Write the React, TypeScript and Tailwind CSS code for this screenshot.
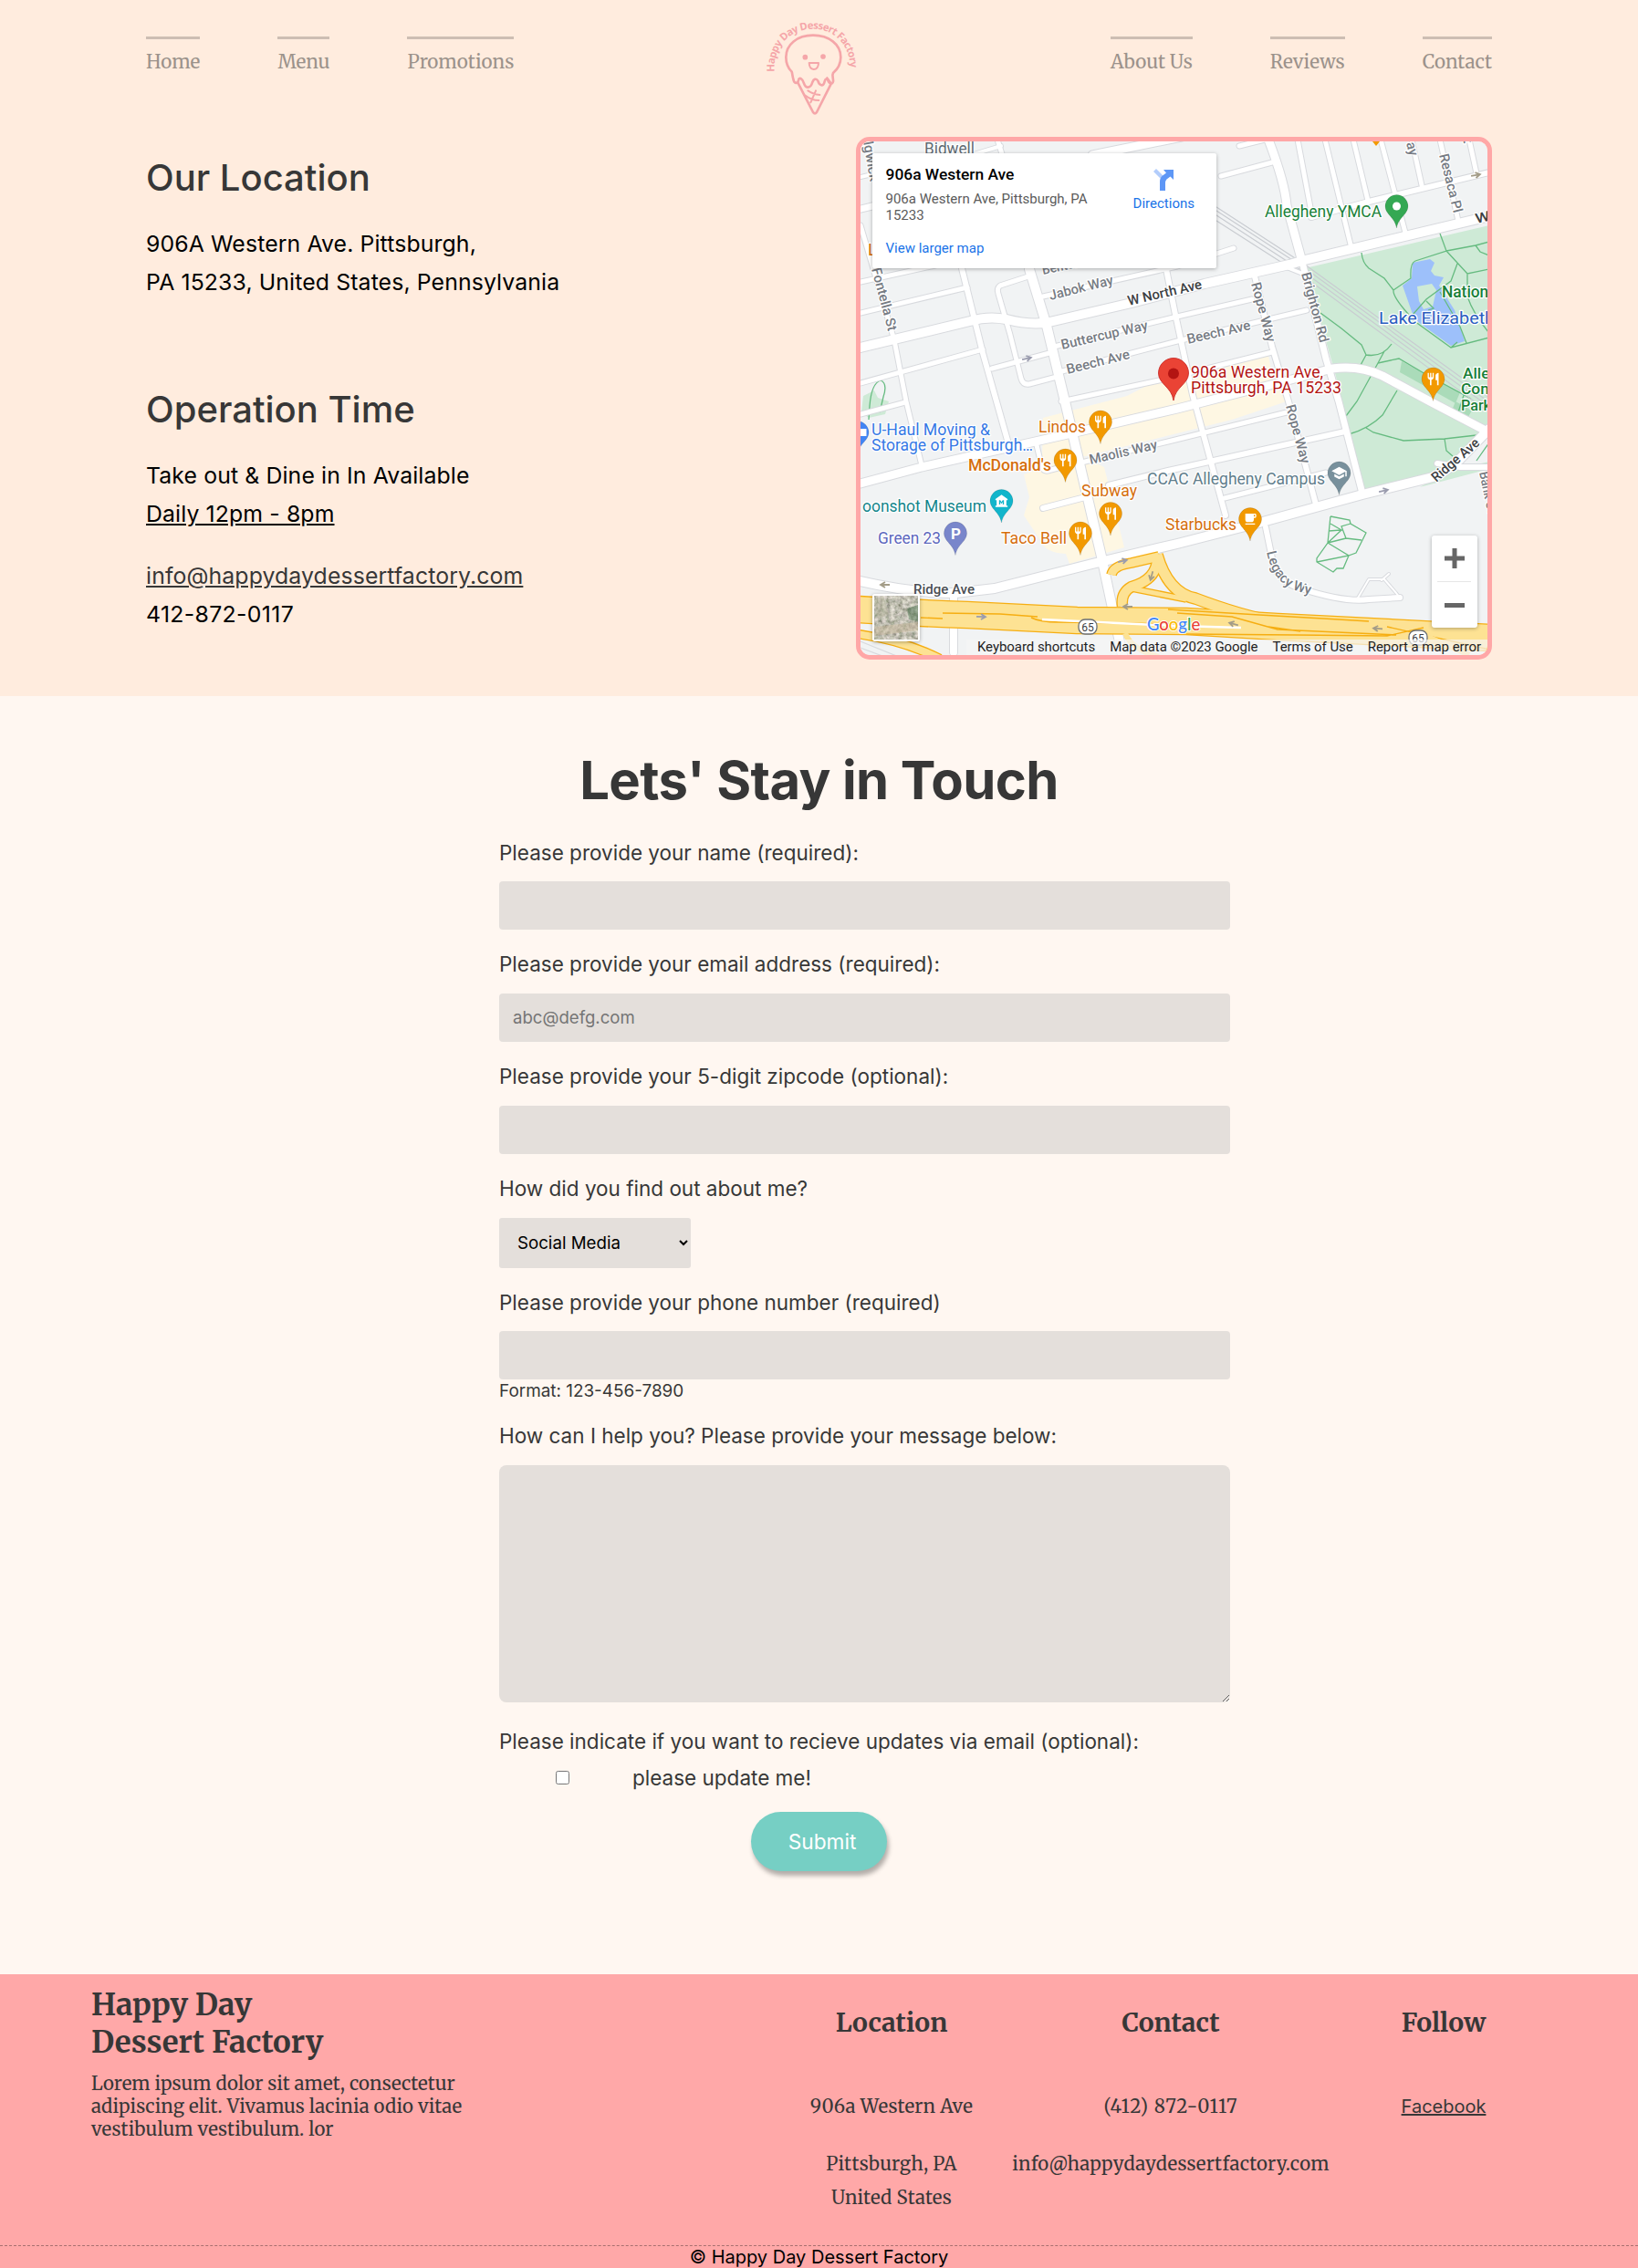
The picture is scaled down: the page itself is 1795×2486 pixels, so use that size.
import type { ReactNode } from "react";
import { MdRestaurant, MdSchool, MdLocalCafe, MdMuseum } from "react-icons/md";

/* ---------- Logo ---------- */

function Logo() {
  return (
    <svg viewBox="150 60 360 330" className="ml-px mt-5 h-[110px] w-[120px]" fill="none" stroke="#f5a6a9" strokeLinecap="round" strokeLinejoin="round">
      <defs>
        <path id="logo-arc" d="M203 236 C196 148 262 95 330 95 C400 95 458 150 452 240" />
      </defs>
      <text fill="#f5a6a9" stroke="none" fontSize="34" fontWeight="700" fontFamily="'Open Sans', 'Noto Sans', sans-serif">
        <textPath href="#logo-arc" textLength="412" lengthAdjust="spacing">Happy Day Dessert Factory</textPath>
      </text>
      <path strokeWidth="8" d="M260 236 C246 222 241 206 241 188 C241 146 278 116 330 116 C382 116 421 146 421 188 C421 208 412 226 396 240 C390 250 400 262 395 271 C390 279 382 273 379 265 C377 256 370 258 368 268 C364 288 350 280 346 266 C340 256 332 260 328 270 C322 292 306 292 300 274 C295 258 284 252 282 264 C279 276 268 276 265 260 C262 250 262 242 260 236 Z" />
      <path strokeWidth="8" d="M280 272 L330 369 Q336 377 342 369 L388 278" />
      <path strokeWidth="7" d="M376 256 L388 272" />
      <path strokeWidth="6" d="M313 298 Q330 310 352 312 M305 314 Q325 330 349 330 M339 298 L322 337" />
      <circle cx="304" cy="188" r="8.500" fill="#f5a6a9" stroke="none" />
      <circle cx="363" cy="186" r="8.500" fill="#f5a6a9" stroke="none" />
      <path strokeWidth="6" d="M317 207 H348 Q347 228 332 228 Q318 227 317 207 Z" />
    </svg>
  );
}

function NavLink({ children }: { children: ReactNode }) {
  return (
    <a href="#" className="border-t-[3px] border-[#cdbeb3] pt-[13px] font-['Merriweather',serif] text-[20.600px] font-normal leading-[25px] text-[#9b928b]">
      {children}
    </a>
  );
}

/* ---------- Map ---------- */

const streets: [number, string][] = [
  [5, "M943 247 L980 373 L993 440 L1010 510"],
  [6, "M1053 290 L1077 387 L1092 440 L1105 486"],
  [5, "M1130 302 L1096 313 Q1092 316 1094 322 L1107 367 L1119 415 Q1121 422 1128 421 L1162 412"],
  [5, "M943 309 L1025 291"],
  [5, "M943 343 L1060 315"],
  [5, "M943 420 L1077 383"],
  [5, "M1087 404 L1150 387"],
  [5, "M943 454 L992 441"],
  [7, "M943 229 L960 225"],
  [4, "M943 194 L960 190"],
  [4, "M1067 169 L1097 160"],
  [5, "M1093 153 L1100 175"],
  [9, "M1197 170 L1295 150"],
  [5, "M1143 325 L1290 292 L1352 272"],
  [5, "M1155 380 L1290 347 L1372 328"],
  [5, "M1160 408 L1290 374 L1432 340"],
  [5, "M1163 440 L1270 417 L1394 386"],
  [6, "M1277 290 L1287 340 L1307 433 L1313 455 L1343 565"],
  [6, "M1375 303 L1394 380 L1412 440 L1442 553"],
  [5, "M1185 507 L1280 484 L1410 452"],
  [6, "M1215 532 L1280 516 L1474 473"],
  [5, "M1342 546 L1453 518"],
  [6, "M1143 557 L1193 544"],
  [5, "M1136 488 L1142 513 Q1145 518 1152 515 L1163 512"],
  [6, "M1387 578 L1395 617 Q1400 637 1425 645 Q1475 661 1500 657 L1534 655"],
  [2, "M1487 657 L1500 635 L1517 635 L1530 650 L1534 655 M1514 636 L1522 629"],
  [5, "M1422 153 L1438 238"],
  [5, "M1452 153 L1480 268"],
  [5, "M1483 153 L1499 220"],
  [5, "M1513 153 L1540 255"],
  [5, "M1547 153 L1558 203"],
  [5, "M1578 153 L1598 242"],
  [5, "M1610 153 L1618 190"],
  [6, "M1437 238 L1500 221 L1632 189"],
  [5, "M1338 193 L1394 178"],
  [5, "M1358 160 L1386 153"],
  [8, "M1045 715 L1045 655"],
  [6, "M1575 508 L1600 512 L1632 512"],
];

const avenues: [number, string][] = [
  [10, "M943 381 L1063 352 Q1083 346 1103 350 Q1130 357 1150 353 L1240 332 L1320 311 L1413 290 L1430 285 L1632 237"],
  [9, "M1390 153 Q1408 200 1410 225 L1427 287"],
  [7, "M1427 287 L1453 393 L1467 440 L1492 537"],
  [10, "M1128 295 L1147 357 L1167 440 L1207 610 L1217 657 L1230 718"],
  [9, "M943 530 L1010 512 L1170 476 L1290 448 L1400 420 L1460 404 Q1490 400 1515 412 L1567 440 L1632 474"],
  [10, "M943 637 Q1000 650 1047 650 L1090 645 L1197 618 L1290 596 L1380 573 L1493 542 L1570 523 Q1585 517 1600 503 L1632 470"],
  [4, "M1405 291 L1430 301"],
];

const highways: [number, string][] = [
  [28, "M940 668 Q1000 672 1060 674 L1180 680 L1300 681 L1400 687 L1500 692 L1632 699"],
  [10, "M935 662 L1000 672"],
  [8, "M940 695 Q990 702 1030 722"],
  [9, "M1218 630 Q1220 620 1240 617 L1270 610"],
  [10, "M1268 608 Q1270 635 1240 643 Q1228 650 1230 664"],
  [11, "M1268 608 Q1280 650 1310 656 Q1360 675 1400 682"],
  [5, "M1240 645 L1300 657"],
];

function Pin({ x, y, color, children }: { x: number; y: number; color: string; children?: ReactNode }) {
  return (
    <g transform={`translate(${x} ${y})`}>
      <path d="M0 24 C-2 12 -12.500 9 -12.500 0 A12.500 12.500 0 1 1 12.500 0 C12.500 9 2 12 0 24 Z" fill={color} stroke="#00000030" strokeWidth=".6" />
      {children}
    </g>
  );
}

function Food({ x, y }: { x: number; y: number }) {
  return (
    <Pin x={x} y={y} color="#f29900">
      <MdRestaurant x={-8} y={-8} size={16} color="#fff" />
    </Pin>
  );
}

function Label({ x, y, w, size = 17, color = "#5f6b73", weight = 400, rotate = 0, children }: {
  x: number; y: number; w: number; size?: number; color?: string; weight?: number; rotate?: number; children: string;
}) {
  return (
    <text
      transform={`translate(${x} ${y}) rotate(${rotate})`}
      fontSize={size}
      fontWeight={weight}
      fill={color}
      textLength={w}
      lengthAdjust="spacingAndGlyphs"
      stroke="#fff"
      strokeWidth="2.5"
      strokeLinejoin="round"
      paintOrder="stroke"
    >
      {children}
    </text>
  );
}

const green = "#188038";
const orange = "#d56e0c";
const arrow = "M-5 0 H4 M0 -3 L5 0 L0 3";

function MapDrawing() {
  return (
    <svg viewBox="943 155 687 563" className="block h-[563px] w-[687px]" fontFamily="Roboto, sans-serif" fill="none">
      <rect x="943" y="155" width="687" height="563" fill="#f1f3f4" />
      <path fill="#fef7e3" d="M1143 458 L1235 434 L1262 420 L1390 390 L1396 420 L1410 440 L1350 460 L1290 475 L1170 505 L1142 500 Z M1142 492 L1165 490 L1210 512 L1232 600 L1172 618 L1168 607 Q1145 606 1140 592 L1122 565 L1128 545 L1122 520 L1145 512 Z" />
      <path fill="#ceead6" d="M1430 294 L1632 247 L1632 470 L1600 504 L1560 526 L1496 541 L1462 405 Z" />
      <path fill="#ceead6" d="M1556 534 L1632 514 L1632 506 L1590 515 Z M946 434 l12 -6 4 8 12 4 -4 14 -18 4 -8 -6 Z" />
      <path fill="#aadbb9" d="M1536 396 L1600 430 L1595 442 L1534 408 Z M1595 440 l18 10 -6 10 -16 -10 Z" />
      <path fill="#9dc0fa" d="M1548 288 L1567 284 L1572 288 L1568 297 L1572 302 L1582 304 L1577 313 L1594 340 L1605 374 L1590 379 L1550 350 L1537 313 L1547 305 Z" />
      <path fill="#ceead6" d="M1553 314 L1569 311 L1574 318 L1570 336 L1560 339 L1555 330 Z" />
      <path stroke="#66bb80" strokeWidth="1.300" d="M1492 277 Q1493 288 1500 294 L1517 305 L1527 318 Q1526 325 1543 344 L1550 352 L1590 381 L1632 370 M1527 318 L1546 305 Q1545 288 1551 286 L1585 275 L1578 256 M1585 275 L1617 269 L1632 265 M1585 275 L1608 300 L1632 295 M1597 289 L1590 308 L1563 328 L1548 345 M1608 300 L1608 325 Q1615 345 1632 365 M1578 320 L1600 358 L1607 376 M1617 269 L1622 276 L1632 280 M1447 343 L1470 360 L1492 378 L1497 389 Q1515 392 1525 377 M1497 389 L1490 402 M1517 385 L1510 398 L1487 440 L1475 456 M1510 398 L1533 393 L1562 410 L1612 437 M1531 428 L1515 455 Q1500 470 1478 476 M1497 469 L1505 474 L1538 483 L1583 481 L1618 477 M1583 481 L1585 494 L1592 500 M1598 452 L1605 430 M1618 505 L1632 485 M1563 330 l8 8 -6 2 M1597 375 L1590 381" />
      <path stroke="#66bb80" strokeWidth="1.300" d="M1458 566 L1479 570 L1480 574 L1497 584 L1486 606 L1478 609 L1472 623 L1465 623 L1461 627 L1443 616 L1443 612 L1455 595 L1458 566 M1458 574 L1470 581 L1456 582 M1455 595 L1475 590 L1492 592 M1455 595 L1478 609 L1443 616 M1475 590 L1470 577 L1480 574 M1470 581 L1455 595 M952 460 L953 445 Q955 420 965 417 Q973 420 968 435 L964 452" />

      <path stroke="#c9ccd1" strokeWidth="1.200" d="M1330 225 L1430 290 L1632 436 M1330 229 L1430 294 L1632 441 M1330 234 L1430 299 L1632 446 M1330 240 L1430 304 L1632 452" />

      {[...streets, ...avenues].map(([w, d]) => (
        <path key={d} d={d} stroke="#d8dade" strokeWidth={w + 2} strokeLinecap="round" strokeLinejoin="round" />
      ))}
      {[...streets, ...avenues].map(([w, d]) => (
        <path key={d} d={d} stroke="#fff" strokeWidth={w} strokeLinecap="round" strokeLinejoin="round" />
      ))}

      <path stroke="#d8dade" strokeWidth="1.200" d="M940 702 L990 722 M940 709 L975 722" />
      {highways.map(([w, d]) => (
        <path key={d} d={d} stroke="#f6ae12" strokeWidth={w + 2.600} />
      ))}
      {highways.map(([w, d]) => (
        <path key={d} d={d} stroke="#fde293" strokeWidth={w} />
      ))}
      <path stroke="#f6ae12" strokeWidth="1.400" d="M1033 672 L1096 673 L1137 676 M1009 677 L1033 678 M1130 677 Q1140 682 1160 682 L1290 684 M1290 672 L1350 676 L1400 690 L1530 696 M1390 687 L1425 692 M1300 695 L1420 696 L1520 697 L1560 688 M1520 687 L1632 712 M1280 668 L1380 674 L1450 678 L1500 681" />
      <path stroke="#fff" strokeWidth="2.500" d="M1142 679 L1290 686 L1360 688" />
      <path stroke="#fde293" strokeWidth="6" d="M1233 694 Q1240 712 1270 720 M1560 696 L1610 718" />

      {[[1125, 393, -12], [1230, 615, -12], [1075, 676, 2], [1516, 538, -12]].map(([x, y, r]) => (
        <path key={x} d={arrow} transform={`translate(${x} ${y}) rotate(${r})`} stroke="#9a9cae" strokeWidth="1.800" />
      ))}
      {[[970, 641, 180], [1236, 665, 180], [1352, 684, 195], [1510, 689, 185], [1262, 631, 105], [1617, 192, -10]].map(([x, y, r]) => (
        <path key={x} d={arrow} transform={`translate(${x} ${y}) rotate(${r})`} stroke="#a39c88" strokeWidth="1.800" />
      ))}

      <Label x={1013} y={169} w={55} size={17.500}>Bidwell</Label>
      <Label x={946} y={156} w={44} size={15} weight={500} rotate={80} color="#767b83">lgwick</Label>
      <Label x={951} y={280} w={10} size={18} color={orange}>L</Label>
      <Label x={955} y={295} w={71} size={15} weight={500} rotate={75} color="#767b83">Fontella St</Label>
      <Label x={1143} y={301} w={72} size={15} weight={500} rotate={-12} color="#767b83">Benton Way</Label>
      <Label x={1151} y={329} w={72} size={15} weight={500} rotate={-14} color="#767b83">Jabok Way</Label>
      <Label x={1237} y={335} w={83} size={15} weight={500} rotate={-13} color="#3c4043">W North Ave</Label>
      <Label x={1164} y={383} w={97} size={15} weight={500} rotate={-13} color="#767b83">Buttercup Way</Label>
      <Label x={1170} y={410} w={71} size={15} weight={500} rotate={-14} color="#767b83">Beech Ave</Label>
      <Label x={1302} y={377} w={71} size={15} weight={500} rotate={-13} color="#767b83">Beech Ave</Label>
      <Label x={1371} y={311} w={67} size={15} weight={500} rotate={75} color="#767b83">Rope Way</Label>
      <Label x={1426} y={300} w={79} size={15} weight={500} rotate={75} color="#767b83">Brighton Rd</Label>
      <Label x={1409} y={445} w={66} size={15} weight={500} rotate={75} color="#767b83">Rope Way</Label>
      <Label x={1195} y={509} w={76} size={15} weight={500} rotate={-13} color="#767b83">Maolis Way</Label>
      <Label x={1577} y={170} w={66} size={15} weight={500} rotate={76} color="#767b83">Resaca Pl</Label>
      <Label x={1541} y={157} w={15} size={15} weight={500} rotate={76} color="#767b83">ay</Label>
      <Label x={1603} y={152} w={6} size={15} weight={500} rotate={76} color="#767b83">t</Label>
      <Label x={1618} y={245} w={16} size={15} weight={500} rotate={-13} color="#3c4043">W</Label>
      <Label x={1574} y={529} w={64} size={15} weight={500} rotate={-41} color="#3c4043">Ridge Ave</Label>
      <Label x={1621} y={518} w={46} size={15} weight={500} rotate={78} color="#767b83">Bank St</Label>
      <Label x={1001} y={651} w={67} size={15} weight={500} color="#4b4f55">Ridge Ave</Label>
      <defs>
        <path id="legacy-wy" d="M1388 605 Q1394 634 1413 644 Q1424 650 1440 652" />
      </defs>
      <text fontSize="15" fontWeight="500" fill="#767b83" stroke="#fff" strokeWidth="2.500" paintOrder="stroke">
        <textPath href="#legacy-wy">Legacy Wy</textPath>
      </text>

      <Label x={1386} y={238} w={128} size={18} color={green}>Allegheny YMCA</Label>
      <Pin x={1530.500} y={226} color="#34a853"><circle r="4.500" fill="#fff" /></Pin>
      <path d="M1504 155 h8 l-4 5 Z" fill="#f29900" />
      <Label x={1580} y={326} w={65} size={17.500} weight={500} color={green}>National</Label>
      <Label x={1511} y={355} w={127} size={18} color="#2a5dc0">Lake Elizabeth</Label>
      <Label x={1603} y={415} w={76} size={17} weight={500} color={green}>Allegheny</Label>
      <Label x={1601} y={432} w={80} size={17} weight={500} color={green}>Commons</Label>
      <Label x={1601} y={450} w={33} size={17} weight={500} color={green}>Park</Label>
      <Food x={1570.500} y={415.500} />

      <Label x={1305} y={414} w={145} size={18} color="#b31412">906a Western Ave,</Label>
      <Label x={1305} y={431} w={165} size={18} color="#b31412">Pittsburgh, PA 15233</Label>
      <path d="M1286 439 C1284 424 1269.500 421 1269.500 409 A16.500 16.500 0 1 1 1302.500 409 C1302.500 421 1288 424 1286 439 Z" fill="#ea4335" stroke="#c5221f" strokeWidth=".8" />
      <circle cx="1286" cy="409.500" r="6" fill="#b31412" />

      <Pin x={939.500} y={474} color="#4285f4"><rect x="3" y="-4" width="7" height="8" fill="#fff" /></Pin>
      <Label x={955} y={477} w={130} size={18} color="#3578e5">{"U-Haul Moving &"}</Label>
      <Label x={955} y={494} w={177} size={18} color="#3578e5">Storage of Pittsburgh…</Label>
      <Label x={1138} y={474} w={52} size={18} color={orange}>Lindos</Label>
      <Food x={1206} y={462.500} />
      <Label x={1061} y={516} w={91} size={17.500} weight={500} color={orange}>McDonald's</Label>
      <Food x={1167.500} y={504.500} />
      <Label x={1185} y={544} w={61} size={17.500} color={orange}>Subway</Label>
      <Food x={1217} y={563} />
      <Label x={1097} y={596} w={72} size={18} color={orange}>Taco Bell</Label>
      <Food x={1184} y={584.500} />
      <Label x={945} y={561} w={136} size={18} color="#13868c">oonshot Museum</Label>
      <Pin x={1097.500} y={549} color="#12b5cb"><MdMuseum x={-8} y={-8} size={16} color="#fff" /></Pin>
      <Label x={962} y={596} w={69} size={18} color="#5c67bd">Green 23</Label>
      <Pin x={1047} y={584.500} color="#7986cb">
        <text x="-5" y="6" fontSize="17" fontWeight="700" fill="#fff">P</text>
      </Pin>
      <Label x={1257} y={531} w={195} size={18} color="#5f7d8b">CCAC Allegheny Campus</Label>
      <Pin x={1467.500} y={518.500} color="#78909c"><MdSchool x={-9} y={-9} size={18} color="#fff" /></Pin>
      <Label x={1277} y={581} w={78} size={18} color={orange}>Starbucks</Label>
      <Pin x={1370} y={569} color="#f29900"><MdLocalCafe x={-8} y={-8} size={16} color="#fff" /></Pin>

      {[[1192, 687], [1554, 699]].map(([x, y]) => (
        <g key={x}>
          <rect x={x - 10} y={y - 8} width="20" height="16" rx="7" fill="#fff" stroke="#6b6f74" strokeWidth="1.300" />
          <text x={x} y={y + 4.500} fontSize="12" textAnchor="middle" fill="#3c4043">65</text>
        </g>
      ))}
      <text x="1257" y="691" fontSize="18.500" fontWeight="500" letterSpacing="-.2" fontFamily="Lato, sans-serif" stroke="#fff" strokeWidth="2" paintOrder="stroke" textLength="58">
        <tspan fill="#4285f4">G</tspan><tspan fill="#ea4335">o</tspan><tspan fill="#fbbc05">o</tspan><tspan fill="#4285f4">g</tspan><tspan fill="#34a853">l</tspan><tspan fill="#ea4335">e</tspan>
      </text>
    </svg>
  );
}

function Satellite() {
  return (
    <svg viewBox="0 0 48 48" className="h-12 w-12">
      <defs>
        <filter id="ground" x="0" y="0" width="100%" height="100%">
          <feTurbulence type="fractalNoise" baseFrequency=".22" numOctaves="4" seed="6" />
          <feColorMatrix values=".9 0 0 0 .08  .8 .1 0 0 .07  .8 0 .05 0 .02  0 0 0 0 1" />
        </filter>
      </defs>
      <rect width="48" height="48" filter="url(#ground)" />
      <path d="M0 34 L48 29 L48 38 L0 44 Z" fill="#c9b593" opacity=".4" />
      <path d="M36 14 L48 10 L48 28 L38 26 Z" fill="#3f6b45" opacity=".45" />
      <path d="M0 4 L10 0 L16 20 L4 26 Z" fill="#a9a98c" opacity=".35" />
    </svg>
  );
}

function MapCard() {
  return (
    <div className="relative h-[573px] w-[697px] overflow-hidden rounded-[15px] border-5 border-[#ffa7a7] font-['Roboto',sans-serif]">
      <MapDrawing />
      <div className="absolute left-[13px] top-[13px] flex h-[126px] w-[377px] justify-between rounded-[2px] bg-white pl-[14.500px] pr-[24px] pt-[13px] shadow-[0_1px_4px_rgba(0,0,0,0.3)]">
        <div>
          <div className="text-[17.400px] font-medium leading-5 text-black">906a Western Ave</div>
          <div className="mt-2 w-[225px] text-[15px] leading-[18px] text-[#5b5b5b]">906a Western Ave, Pittsburgh, PA 15233</div>
          <div className="mt-[18px] text-[15px] leading-[18px] text-[#1a73e8]">View larger map</div>
        </div>
        <div className="flex flex-col items-center">
          <svg viewBox="0 0 24 24" className="mt-1 h-6 w-6">
            <path d="M1 3 L4 0 L12 8 L11 13 Z" fill="#b3cdfb" />
            <path d="M8 24 V14 Q8 10 11 7.500 L15 4.500 L12 1 H23 V12 L19.500 8.500 L15.500 11.500 Q14 13 14 15 V24 Z" fill="#5e97f6" />
          </svg>
          <div className="mt-[5px] text-[15px] leading-[18px] text-[#1a73e8]">Directions</div>
        </div>
      </div>
      <div className="absolute bottom-[15px] left-[13px] rounded-[3px] border-2 border-white shadow-[0_1px_4px_rgba(0,0,0,0.3)]">
        <Satellite />
      </div>
      <div className="absolute bottom-[30px] right-[11px] flex h-[101px] w-[50px] flex-col items-center rounded-[3px] bg-white shadow-[0_1px_4px_rgba(0,0,0,0.3)]">
        <svg viewBox="0 0 50 101" className="h-[101px] w-[50px]">
          <path d="M14 25 H36 M25 14 V36 M14 76.500 H36" stroke="#666" strokeWidth="5" />
          <path d="M6 50.500 H43" stroke="#e6e6e6" strokeWidth="1" />
        </svg>
      </div>
      <div className="absolute bottom-0 right-0 flex h-[17px] items-center gap-[16px] bg-[#f5f5f5]/70 pl-3 pr-[7px] text-[15px] leading-[17px] tracking-[-0.050px] text-[#1f1f1f]">
        <span>Keyboard shortcuts</span>
        <span>Map data ©2023 Google</span>
        <span>Terms of Use</span>
        <span>Report a map error</span>
      </div>
    </div>
  );
}

/* ---------- Form ---------- */

function FieldLabel({ children, className = "" }: { children: ReactNode; className?: string }) {
  return <label className={`block text-[22.500px] leading-7 text-[#373737] ${className}`}>{children}</label>;
}

function TextInput({ placeholder, className = "mt-[18px]" }: { placeholder?: string; className?: string }) {
  return (
    <input
      placeholder={placeholder}
      className={`block h-[53px] w-[801px] rounded-[4px] bg-[#e4dfdb] px-[15px] pb-px text-[18.600px] placeholder:text-[#757575] ${className}`}
    />
  );
}

function ContactForm() {
  return (
    <section className="h-[1401px] bg-[#fff7f1] pt-[57px]">
      <h1 className="text-center text-[58px] font-bold leading-[70px] tracking-[-0.600px] text-[#373737]">Lets' Stay in Touch</h1>
      <form className="ml-[547px] w-[801px]">
        <FieldLabel className="mt-[31px]">Please provide your name (required):</FieldLabel>
        <TextInput className="mt-[17px]" />
        <FieldLabel className="mt-6">Please provide your email address (required):</FieldLabel>
        <TextInput placeholder="abc@defg.com" />
        <FieldLabel className="mt-6">Please provide your 5-digit zipcode (optional):</FieldLabel>
        <TextInput />
        <FieldLabel className="mt-6">How did you find out about me?</FieldLabel>
        <select className="mt-[18px] block h-[55px] w-[210px] rounded-[3px] bg-[#e4dfdb] px-4 pb-px text-[18.700px] text-black">
          <option>Social Media</option>
        </select>
        <FieldLabel className="mt-6">Please provide your phone number (required)</FieldLabel>
        <TextInput className="mt-[17px]" />
        <small className="block pt-px text-[18.900px] leading-[23px] text-[#373737]">Format: 123-456-7890</small>
        <FieldLabel className="mt-6">How can I help you? Please provide your message below:</FieldLabel>
        <textarea className="mt-[18px] block h-[260px] w-[801px] rounded-[8px] bg-[#e4dfdb]" />
        <FieldLabel className="mt-[29px]">Please indicate if you want to recieve updates via email (optional):</FieldLabel>
        <div className="mt-[11px] flex h-7 items-center pl-[62px]">
          <input type="checkbox" className="h-[15px] w-[15px]" />
          <span className="ml-[69px] pt-[2px] text-[22.500px] leading-7 text-[#373737]">please update me!</span>
        </div>
        <button type="button" className="ml-[276px] mt-6 block h-[65px] w-[149px] rounded-full bg-[#76cfc4] pl-[7px] pt-px text-[22.700px] text-white shadow-[2px_5px_5px_rgba(0,0,0,0.3)]">
          Submit
        </button>
      </form>
    </section>
  );
}

/* ---------- Footer ---------- */

function FooterColumn({ title, className, children }: { title: string; className: string; children: ReactNode }) {
  return (
    <div className={`flex shrink-0 flex-col items-center whitespace-nowrap pt-[35px] ${className}`}>
      <h3 className="mb-[62px] text-[28.200px] font-bold leading-9 tracking-normal">{title}</h3>
      {children}
    </div>
  );
}

function Footer() {
  return (
    <footer className="bg-[#ffa8a8] font-['Merriweather',serif] text-[20.400px] font-normal leading-[25px] tracking-[0.090px] text-[#373737]">
      <div className="flex h-[297px] pl-[100px]">
        <div className="w-[788px] pt-[13px]">
          <h2 className="text-[33px] font-bold leading-[41px] tracking-normal">Happy Day<br />Dessert Factory</h2>
          <p className="mt-[13px] whitespace-nowrap">
            Lorem ipsum dolor sit amet, consectetur<br />
            adipiscing elit. Vivamus lacinia odio vitae<br />
            vestibulum vestibulum. lor
          </p>
        </div>
        <FooterColumn title="Location" className="w-[178px]">
          <p className="tracking-[0.200px]">906a Western Ave</p>
          <p className="mt-[38px] tracking-[0.200px]">Pittsburgh, PA</p>
          <p className="mt-3 tracking-[0.200px]">United States</p>
        </FooterColumn>
        <FooterColumn title="Contact" className="ml-[43px] w-[348px]">
          <p className="tracking-[0.850px]">(412) 872-0117</p>
          <p className="mt-[38px] tracking-[0.200px]">info@happydaydessertfactory.com</p>
        </FooterColumn>
        <FooterColumn title="Follow" className="ml-[78px] w-[94px]">
          <a href="#" className="font-['Inter',sans-serif] text-[20px] tracking-normal underline">Facebook</a>
        </FooterColumn>
      </div>
      <div className="border-t border-dashed border-[#a86f6f] text-center font-['Inter',sans-serif] text-[20px] leading-6 tracking-normal text-black">
        © Happy Day Dessert Factory
      </div>
    </footer>
  );
}

export default function App() {
  return (
    <div className="w-[1795px] font-['Inter',sans-serif]">
      <section className="h-[763px] bg-[#ffecde]">
        <header className="flex h-[150px] items-start justify-between px-40">
          <nav className="mt-10 flex gap-[85px]">
            <NavLink>Home</NavLink>
            <NavLink>Menu</NavLink>
            <NavLink>Promotions</NavLink>
          </nav>
          <Logo />
          <nav className="mt-10 flex gap-[85px]">
            <NavLink>About Us</NavLink>
            <NavLink>Reviews</NavLink>
            <NavLink>Contact</NavLink>
          </nav>
        </header>
        <div className="flex justify-between px-40">
          <div className="pt-[21px] text-[24.800px] leading-[42px] tracking-[0.120px] text-black">
            <h2 className="text-[40px] font-medium leading-[48px] tracking-normal text-[#373737]">Our Location</h2>
            <p className="mt-[27px]">906A Western Ave. Pittsburgh,<br />PA 15233, United States, Pennsylvania</p>
            <h2 className="mt-[95px] text-[40px] font-medium leading-[48px] tracking-normal text-[#373737]">Operation Time</h2>
            <p className="mt-[27px]">Take out &amp; Dine in In Available<br /><u>Daily 12pm - 8pm</u></p>
            <p className="mt-[26px]"><a href="#" className="text-[#373737] underline">info@happydaydessertfactory.com</a><br /><span className="tracking-[0.350px]">412-872-0117</span></p>
          </div>
          <MapCard />
        </div>
      </section>
      <ContactForm />
      <Footer />
    </div>
  );
}
